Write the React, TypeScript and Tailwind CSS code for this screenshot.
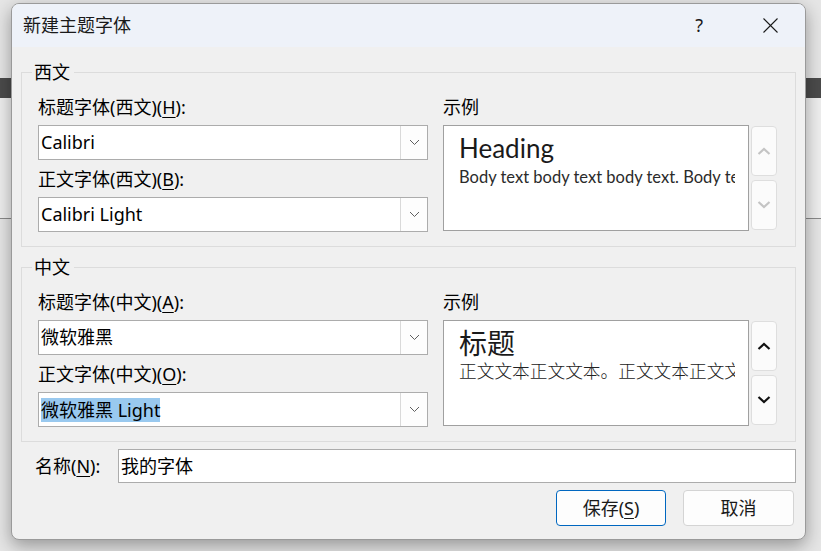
import React from 'react';

const font = "font-['Noto_Sans','Noto_Sans_CJK_SC',sans-serif]";

function Chevron() {
  return (
    <svg width="11" height="7" viewBox="0 0 11 7">
      <polyline points="1,1 5.5,5.5 10,1" fill="none" stroke="#5f5f5f" strokeWidth="1" />
    </svg>
  );
}

function Combo({ value, selected }: { value: string; selected?: boolean }) {
  return (
    <div className="flex h-[35px] w-[390px] border border-[#acacac] bg-white">
      <div className="flex flex-1 items-center pl-[2px] text-[18px] text-black">
        {selected ? <span className="bg-[#99c9ef] leading-[24px]">{value}</span> : <span>{value}</span>}
      </div>
      <div className="flex w-[27px] items-center justify-center border-l border-[#d9d9d9] bg-[#fdfdfd]">
        <Chevron />
      </div>
    </div>
  );
}

function SpinButton({ up, dark }: { up?: boolean; dark?: boolean }) {
  const color = dark ? '#111111' : '#c4c4c4';
  return (
    <div className="flex h-[50px] w-[26px] items-center justify-center rounded-[4px] border border-[#dedede] bg-[#fbfbfb]">
      <svg width="14" height="8" viewBox="0 0 14 8">
        {up ? (
          <polyline points="1.5,7 7,2 12.5,7" fill="none" stroke={color} strokeWidth="2.2" />
        ) : (
          <polyline points="1.5,1 7,6 12.5,1" fill="none" stroke={color} strokeWidth="2.2" />
        )}
      </svg>
    </div>
  );
}

function Group({
  title,
  headLabel,
  headKey,
  bodyLabel,
  bodyKey,
  scope,
  headFont,
  bodyFont,
  bodySelected,
  chinese,
}: {
  title: string;
  headLabel: string;
  headKey: string;
  bodyLabel: string;
  bodyKey: string;
  scope: string;
  headFont: string;
  bodyFont: string;
  bodySelected?: boolean;
  chinese?: boolean;
}) {
  return (
    <fieldset className="border border-[#dcdcdc] pb-[14px] pl-[16px] pr-[18px]">
      <legend className="ml-[-6px] px-[2px] pr-[4px] text-[18px] leading-[24px] text-black">{title}</legend>
      <div className="mt-[11px] flex">
        <div className="flex w-[390px] flex-col">
          <div className="h-[24px] text-[18px] leading-[24px] text-black">
            {headLabel}({scope})(<span className="underline underline-offset-[3px]">{headKey}</span>):
          </div>
          <div className="mt-[6px]">
            <Combo value={headFont} />
          </div>
          <div className="mt-[7px] h-[24px] text-[18px] leading-[24px] text-black">
            {bodyLabel}({scope})(<span className="underline underline-offset-[3px]">{bodyKey}</span>):
          </div>
          <div className="mt-[6px]">
            <Combo value={bodyFont} selected={bodySelected} />
          </div>
        </div>
        <div className="ml-[15px] flex flex-1 flex-col">
          <div className="h-[24px] text-[18px] leading-[24px] text-black">示例</div>
          <div className="mt-[6px] flex">
            <div className="h-[106px] w-[306px] overflow-hidden border border-[#a0a0a0] bg-white pl-[15px] pr-[13px]">
              {chinese ? (
                <div>
                  <div className="mt-[4px] whitespace-nowrap text-[28px] leading-[36px] text-[#1a1a1a]">标题</div>
                  <div className="mt-[-2px] overflow-hidden whitespace-nowrap text-[17.7px] font-light leading-[24px] text-[#222]">
                    正文文本正文文本。正文文本正文文本。
                  </div>
                </div>
              ) : (
                <div className="font-['Lato','Liberation_Sans',sans-serif]">
                  <div className="mt-[6px] whitespace-nowrap text-[26px] leading-[32px] text-[#1a1a1a]">Heading</div>
                  <div className="mt-[3px] overflow-hidden whitespace-nowrap text-[16.5px] leading-[20px] text-[#2b2b2b]">
                    Body text body text body text. Body text body text.
                  </div>
                </div>
              )}
            </div>
            <div className="ml-[2px] mt-[1px] flex flex-col gap-[4px]">
              <SpinButton up dark={chinese} />
              <SpinButton dark={chinese} />
            </div>
          </div>
        </div>
      </div>
    </fieldset>
  );
}

export default function App() {
  return (
    <div className={`relative h-[551px] w-[821px] overflow-hidden bg-[#e6e6e6] pl-[11px] pt-[3px] ${font}`}>
      {/* window behind the dialog */}
      <div className="absolute left-0 top-[78px] h-[20px] w-full bg-[#4b4b4b]" />
      <div className="absolute left-0 top-[218px] h-px w-full bg-[#8a8a8a]" />
      <div className="absolute left-0 top-[98px] h-[120px] w-full bg-[#efefef]" />

      <div className="relative flex h-[537px] w-[795px] flex-col overflow-hidden rounded-[8px] border border-[#9a9a9a] bg-[#f0f0f0] shadow-[0_6px_18px_rgba(0,0,0,0.35)]">
        <div className="flex h-[43px] items-center bg-[#eef2f9] pl-[11px]">
          <div className="text-[18px] text-[#1a1a1a]">新建主题字体</div>
          <div className="ml-auto mr-[59px] text-[18px] text-[#1a1a1a]">?</div>
          <div className="mr-[27px] flex h-[16px] w-[16px] items-center justify-center">
            <svg width="15" height="15" viewBox="0 0 15 15">
              <line x1="0.5" y1="0.5" x2="14.5" y2="14.5" stroke="#1a1a1a" strokeWidth="1.1" />
              <line x1="14.5" y1="0.5" x2="0.5" y2="14.5" stroke="#1a1a1a" strokeWidth="1.1" />
            </svg>
          </div>
        </div>

        <div className="flex flex-1 flex-col px-[9px] pt-[13px]">
          <Group
            title="西文"
            headLabel="标题字体"
            headKey="H"
            bodyLabel="正文字体"
            bodyKey="B"
            scope="西文"
            headFont="Calibri"
            bodyFont="Calibri Light"
          />
          <div className="mt-[8px]">
            <Group
              title="中文"
              headLabel="标题字体"
              headKey="A"
              bodyLabel="正文字体"
              bodyKey="O"
              scope="中文"
              headFont="微软雅黑"
              bodyFont="微软雅黑 Light"
              bodySelected
              chinese
            />
          </div>

          <div className="mt-[7px] flex items-center">
            <div className="w-[97px] pl-[14px] text-[18px] text-black">
              名称(<span className="underline underline-offset-[3px]">N</span>):
            </div>
            <div className="flex h-[34px] flex-1 items-center border border-[#acacac] bg-white pl-[2px] text-[18px] text-black">
              我的字体
            </div>
          </div>

          <div className="mt-[7px] flex justify-end gap-[17px] pr-[2px]">
            <button className="h-[36px] w-[110px] rounded-[4px] border border-[#0067c0] bg-[#fdfdfd] text-[18px] text-[#1a1a1a]">
              保存(<span className="underline underline-offset-[3px]">S</span>)
            </button>
            <button className="h-[36px] w-[111px] rounded-[4px] border border-[#d4d4d4] bg-[#fdfdfd] text-[18px] text-[#1a1a1a]">
              取消
            </button>
          </div>
        </div>
      </div>
    </div>
  );
}
